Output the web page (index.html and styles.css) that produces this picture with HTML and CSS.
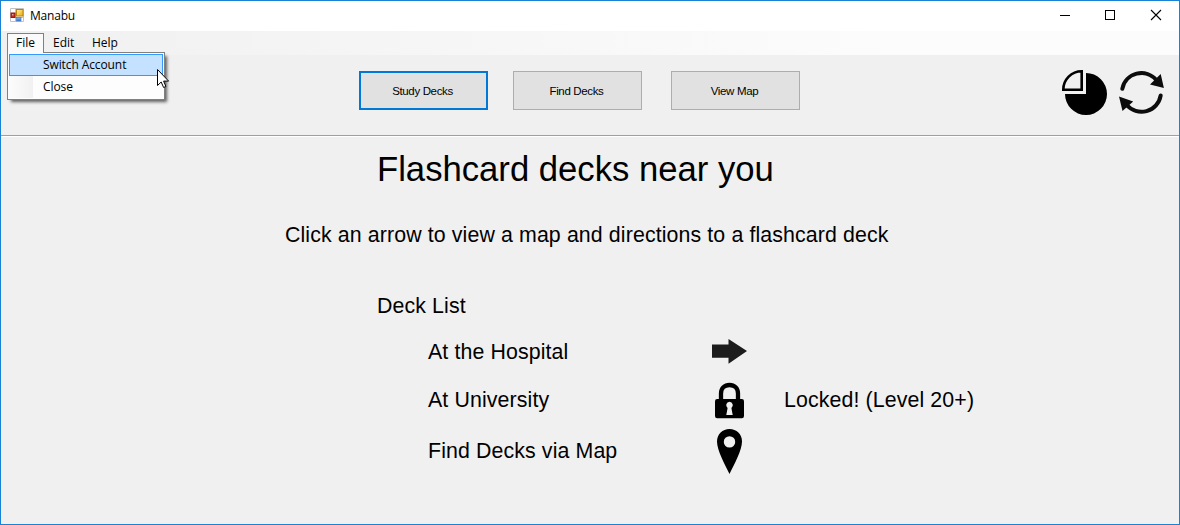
FILE: index.html
```html
<!DOCTYPE html>
<html lang="en">
<head>
<meta charset="utf-8">
<title>Manabu</title>
<link rel="stylesheet" href="styles.css">
</head>
<body>
<div class="window">
  <header class="titlebar">
    <svg class="app-icon" width="14" height="14" viewBox="0 0 14 14">
      <defs>
        <linearGradient id="gold" x1="0" y1="0" x2="1" y2="1"><stop offset="0" stop-color="#fff3a8"/><stop offset="1" stop-color="#f0a800"/></linearGradient>
        <linearGradient id="blue" x1="0" y1="0" x2="0" y2="1"><stop offset="0" stop-color="#8db8ef"/><stop offset="1" stop-color="#3468c8"/></linearGradient>
      </defs>
      <path d="M.5.5h13v13H.5z" fill="#fff" stroke="#c3c3c3"/>
      <path d="M5.500.5v13M.5 9.500h13" stroke="#c3c3c3"/>
      <rect x="1" y="5" width="4" height="4.500" fill="#c9281e" stroke="#8e1a14"/>
      <rect x="2" y="6" width="1.500" height="1.500" fill="#f0a090"/>
      <rect x="6.500" y="1.500" width="6.500" height="6.500" fill="url(#gold)" stroke="#b8860b"/>
      <rect x="6.500" y="9.500" width="4.500" height="3.500" fill="url(#blue)" stroke="#4a7ccf" stroke-width=".7"/>
    </svg>
    <span class="title">Manabu</span>
    <svg class="controls" width="106" height="12" viewBox="0 0 106 12">
      <path d="M0 6.500h10M45.500 1.500h9v9h-9z" fill="none" stroke="#000" shape-rendering="crispEdges"/>
      <path d="M91 1l10 10M101 1L91 11" fill="none" stroke="#000" stroke-width="1.100"/>
    </svg>
  </header>

  <nav class="menubar">
    <div class="menu open">File
      <ul class="dropdown">
        <li class="selected">Switch Account</li>
        <li>Close</li>
      </ul>
    </div>
    <div class="menu">Edit</div>
    <div class="menu">Help</div>
  </nav>

  <section class="toolbar">
    <div class="buttons">
      <button class="focused">Study Decks</button>
      <button>Find Decks</button>
      <button class="map">View Map</button>
    </div>
    <div class="tools">
      <svg width="46" height="46" viewBox="0 0 46 46">
        <path d="M24 24V3A21 21 0 1 1 3 24z" fill="#000"/>
        <path d="M19.700 1.300V19.700H1.300A18.400 18.400 0 0 1 19.700 1.300z" fill="#f0f0f0" stroke="#000" stroke-width="2.600"/>
      </svg>
      <svg width="46" height="46" viewBox="0 0 46 46">
        <path d="M4.300 18.800A19.500 19.500 0 0 1 38.500 10.200M42.700 25.400A19.500 19.500 0 0 1 8.500 34.800" fill="none" stroke="#0c0c0c" stroke-width="4" stroke-linecap="round"/>
        <path d="M42.700 4L45.900 18 32 14.500zM1 26.500L15.200 31.500 4.500 40.900z" fill="#0c0c0c"/>
      </svg>
    </div>
  </section>

  <main class="content">
    <h1>Flashcard decks near you</h1>
    <p class="hint">Click an arrow to view a map and directions to a flashcard deck</p>
    <h2>Deck List</h2>
    <div class="decks">
      <span class="deck">At the Hospital</span>
      <svg width="36" height="46" viewBox="0 0 36 46"><path d="M1 16.500h16.500v-5.500L36 23 17.500 35.700v-6H1z" fill="#1c1c1c"/></svg>
      <span></span>
      <span class="deck">At University</span>
      <svg width="36" height="46" viewBox="0 0 36 46">
        <path d="M10 25V16.500c0-5 3.500-8.500 8.500-8.500s8.500 3.500 8.500 8.500V25" fill="none" stroke="#000" stroke-width="4.300"/>
        <rect x="4" y="22" width="29" height="19.300" rx="2.200"/>
        <path d="M18.500 24.800a3.500 3.500 0 0 1 1.900 6.300l1.300 6.900h-6.400l1.300-6.900a3.500 3.500 0 0 1 1.900-6.300z" fill="#f0f0f0"/>
      </svg>
      <span class="locked">Locked! (Level 20+)</span>
      <span class="deck">Find Decks via Map</span>
      <svg width="36" height="46" viewBox="0 0 36 46"><path fill-rule="evenodd" d="M18.500 1C11.500 1 6 6.200 6 13.500 6 22 14 37 18.500 46 23 37 31 22 31 13.500 31 6.200 25.500 1 18.500 1zm0 7.200a5.700 5.700 0 1 1 0 11.400 5.700 5.700 0 0 1 0-11.400z"/></svg>
      <span></span>
    </div>
  </main>
  <svg class="cursor" width="13" height="20" viewBox="0 0 13 20"><path d="M.5.500v16l3.700-3.500 2.400 5.500 2.300-1-2.300-5.400h5z" fill="#fff" stroke="#000"/></svg>
</div>
</body>
</html>
```

FILE: styles.css
```css
* { box-sizing: border-box; }
body { margin: 0; }
.window {
  position: relative;
  display: flex;
  flex-direction: column;
  width: 1180px;
  height: 525px;
  border: 1px solid #1a82d5;
  background: #f0f0f0;
  color: #000;
  font-family: "Liberation Sans", Arial, sans-serif;
}
svg { display: block; }
.titlebar {
  display: flex;
  align-items: center;
  height: 30px;
  padding: 0 13px 2px 9px;
  background: #fff;
  font: 12px/20px "Open Sans", "Noto Sans", sans-serif;
}
.title { margin: 2px 0 0 6px; letter-spacing: -.2px; }
.controls { margin-left: auto; }
.menubar {
  display: flex;
  height: 24px;
  padding: 2px 0 0 6px;
  background: linear-gradient(90deg, #f0f0f0, #fcfcfc 75%);
  font: 12px/18px "Open Sans", "Noto Sans", sans-serif;
}
.menu { position: relative; width: 37px; height: 20px; padding-left: 7px; border: 1px solid transparent; white-space: nowrap; }
.menu + .menu { margin-left: 1px; }
.menu + .menu + .menu { margin-left: 2px; }
.menu.open { padding-left: 8px; border-color: #808080; border-bottom: 0; background: #fafafa; }
.dropdown {
  position: absolute;
  z-index: 1;
  top: 18px;
  left: -1px;
  width: 158px;
  height: 48px;
  margin: 0;
  padding: 1px 1px 2px;
  border: 1px solid #808080;
  background: linear-gradient(90deg, #fcfcfc, #f1f1f1) 1px 1px / 24px 44px no-repeat #fdfdfd;
  box-shadow: 3px 3px 3px -1px rgba(0, 0, 0, .6);
  list-style: none;
  letter-spacing: -.1px;
}
.dropdown::before { content: ""; position: absolute; top: -1px; left: 0; width: 35px; height: 1px; background: #fafafa; }
.dropdown li { height: 22px; padding-left: 34px; line-height: 22px; }
.dropdown .selected { padding-left: 33px; line-height: 20px; border: 1px solid #3399ff; background: #c4e1ff; }
.toolbar {
  display: flex;
  justify-content: space-between;
  height: 82px;
  padding: 15px 15px 0 358px;
  border-bottom: 1px solid #fff;
  box-shadow: inset 0 -1px #a0a0a0;
}
.buttons { display: flex; gap: 25px; padding-top: 1px; }
.buttons button {
  width: 129px;
  height: 39px;
  padding: 0 2px 0 0;
  border: 1px solid #adadad;
  background: #e1e1e1;
  color: #000;
  font: 11.5px/16px "Liberation Sans", Arial, sans-serif;
  letter-spacing: -.35px;
}
.buttons .map { margin-left: 4px; }
.buttons .focused { border: 2px solid #0078d7; }
.tools { display: flex; gap: 10px; }
.content { display: flex; flex-direction: column; }
h1, h2, p { margin: 0; font-weight: 400; }
h1 { margin: 12px 0 0 376px; font-size: 34.67px; line-height: 40px; }
.hint { margin: 34px 0 0 284px; }
.hint, h2, .deck, .locked { font-size: 21.33px; line-height: 24px; letter-spacing: .115px; white-space: nowrap; }
h2 { margin: 47px 0 0 376px; }
.decks { display: grid; grid-template-columns: 283px 73px auto; grid-template-rows: 46px 51px 51px; align-items: center; margin: 10px 0 0 427px; }
.deck:first-child { padding-top: 2px; }
.cursor { position: absolute; z-index: 2; left: 156px; top: 68px; }
```
